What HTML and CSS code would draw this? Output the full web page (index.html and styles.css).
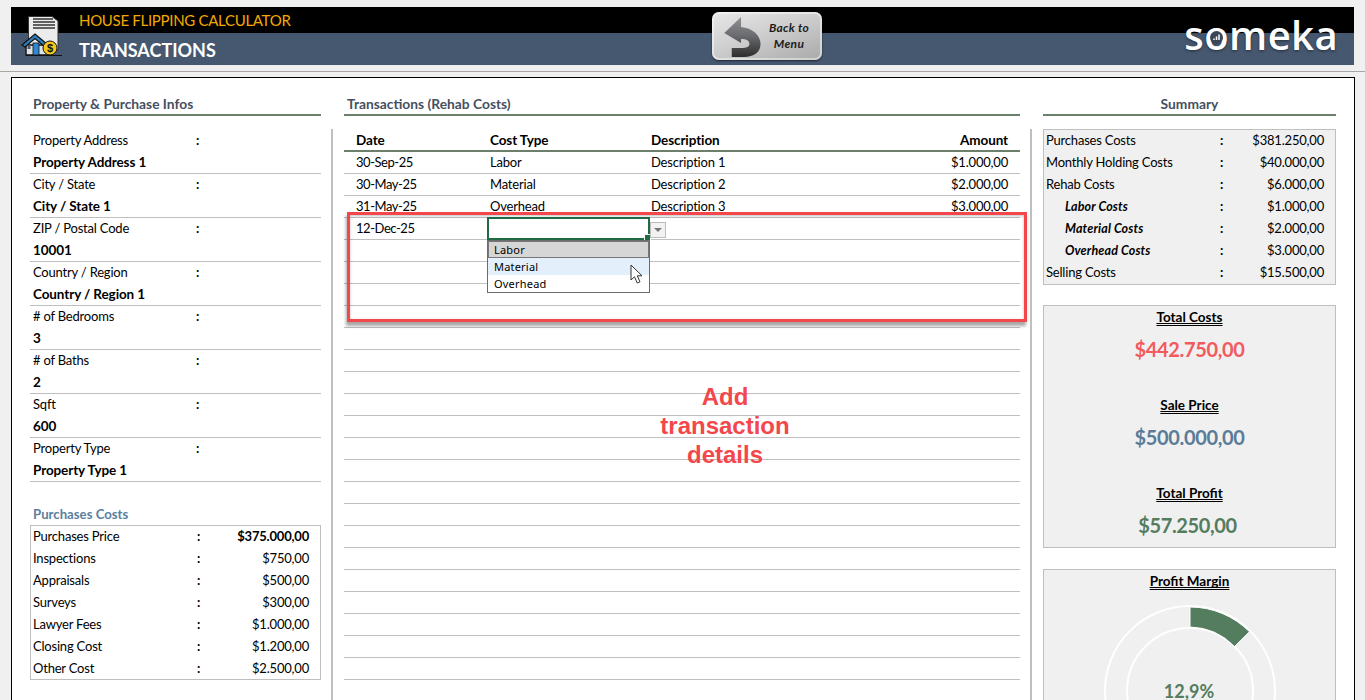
FILE: index.html
```html
<!DOCTYPE html>
<html lang="en">
<head>
<meta charset="utf-8">
<title>House Flipping Calculator - Transactions</title>
<link rel="stylesheet" href="styles.css">
</head>
<body>
<header class="banner">
  <div class="banner-top"><span class="app-name">HOUSE FLIPPING CALCULATOR</span></div>
  <div class="banner-bottom"><span class="page-name">TRANSACTIONS</span></div>
  <svg class="app-icon" width="60" height="56" viewBox="0 0 60 56">
    <path d="M13.5 8.5H37L43 13V42H13.5Z" fill="#ececec" stroke="#333" stroke-width="1"/>
    <path d="M18 11H38M18 14H40M18 17H40M18 20H40" stroke="#333" stroke-width="1.4"/>
    <path d="M11 37V47H37V37Z" fill="#dfe3e8" stroke="#111" stroke-width="1.4"/>
    <path d="M7 37L20 26L33 37L30 39L20 30.5L10 39Z" fill="#2f7fc0" stroke="#111" stroke-width="1.2"/>
    <rect x="18" y="35" width="6" height="12" fill="#2f87d0" stroke="#111" stroke-width=".8"/>
    <rect x="12.500" y="37" width="3" height="4" fill="#556"/>
    <path d="M11 47.500H47" stroke="#111" stroke-width="1.2"/>
    <circle cx="35" cy="40" r="7" fill="#f7c51e" stroke="#111" stroke-width="1"/>
    <text class="coin" x="35" y="44" text-anchor="middle">$</text>
  </svg>
  <div class="back-btn">
    <svg class="back-arrow" width="46" height="44" viewBox="0 0 46 44">
      <defs>
        <linearGradient id="ar" x1="0" y1="0" x2="0" y2="1">
          <stop offset="0" stop-color="#8f9296"/>
          <stop offset=".45" stop-color="#6b6d70"/>
          <stop offset="1" stop-color="#2e2e2e"/>
        </linearGradient>
      </defs>
      <path d="M28 2L10 18L28 28V24C33 24 37 25 37 29C37 32 33 33 29 33H18V42H31C42 42 49 37 49 29C49 20 40 13 28 12Z" transform="translate(-2 0) scale(.93 1)" fill="url(#ar)"/>
    </svg>
    <span class="back-text">Back to<br>Menu</span>
  </div>
  <div class="logo">s<span class="logo-o">o<svg class="logo-mark" width="13" height="13" viewBox="0 0 13 13"><circle cx="6.5" cy="6.5" r="6.5" fill="#3a4656"/><path d="M4 9V7.5M6.5 9V5.5M9 9V3.5" stroke="#fff" stroke-width="1.5"/></svg></span>meka</div>
</header>
<div class="rule"></div>
<main class="panel">
  <section class="col-left">
    <h2 class="sec-title">Property &amp; Purchase Infos</h2>
    <div class="list">
      <div class="pair"><span class="lbl">Property Address</span><span class="colon">:</span></div>
      <div class="pair val">Property Address 1</div>
      <div class="pair"><span class="lbl">City / State</span><span class="colon">:</span></div>
      <div class="pair val">City / State 1</div>
      <div class="pair"><span class="lbl">ZIP / Postal Code</span><span class="colon">:</span></div>
      <div class="pair val">10001</div>
      <div class="pair"><span class="lbl">Country / Region</span><span class="colon">:</span></div>
      <div class="pair val">Country / Region 1</div>
      <div class="pair"><span class="lbl"># of Bedrooms</span><span class="colon">:</span></div>
      <div class="pair val">3</div>
      <div class="pair"><span class="lbl"># of Baths</span><span class="colon">:</span></div>
      <div class="pair val">2</div>
      <div class="pair"><span class="lbl">Sqft</span><span class="colon">:</span></div>
      <div class="pair val">600</div>
      <div class="pair"><span class="lbl">Property Type</span><span class="colon">:</span></div>
      <div class="pair val">Property Type 1</div>
    </div>
    <h3 class="sub-title">Purchases Costs</h3>
    <div class="cost-box">
      <div class="cost"><span>Purchases Price</span><span class="c">:</span><b class="num strong">$375.000,00</b></div>
      <div class="cost"><span>Inspections</span><span class="c">:</span><span class="num">$750,00</span></div>
      <div class="cost"><span>Appraisals</span><span class="c">:</span><span class="num">$500,00</span></div>
      <div class="cost"><span>Surveys</span><span class="c">:</span><span class="num">$300,00</span></div>
      <div class="cost"><span>Lawyer Fees</span><span class="c">:</span><span class="num">$1.000,00</span></div>
      <div class="cost"><span>Closing Cost</span><span class="c">:</span><span class="num">$1.200,00</span></div>
      <div class="cost"><span>Other Cost</span><span class="c">:</span><span class="num">$2.500,00</span></div>
    </div>
  </section>
  <div class="divider"></div>
  <section class="col-mid">
    <h2 class="sec-title">Transactions (Rehab Costs)</h2>
    <div class="table">
      <div class="tr th"><span>Date</span><span>Cost Type</span><span>Description</span><span class="amt">Amount</span></div>
      <div class="tr"><span class="date">30-Sep-25</span><span>Labor</span><span>Description 1</span><span class="amt">$1.000,00</span></div>
      <div class="tr"><span class="date">30-May-25</span><span>Material</span><span>Description 2</span><span class="amt">$2.000,00</span></div>
      <div class="tr"><span class="date">31-May-25</span><span>Overhead</span><span>Description 3</span><span class="amt">$3.000,00</span></div>
      <div class="tr"><span class="date">12-Dec-25</span></div>
      <div class="tr"></div><div class="tr"></div><div class="tr"></div><div class="tr"></div><div class="tr"></div>
      <div class="tr"></div><div class="tr"></div><div class="tr"></div><div class="tr"></div><div class="tr"></div>
      <div class="tr"></div><div class="tr"></div><div class="tr"></div><div class="tr"></div><div class="tr"></div>
      <div class="tr"></div><div class="tr"></div><div class="tr"></div><div class="tr"></div><div class="tr"></div>
    </div>
    <div class="callout"></div>
    <div class="cell-sel"></div>
    <div class="dd-btn"><i class="dd-tri"></i></div>
    <ul class="dd-list">
      <li class="dd-item dd-cur">Labor</li>
      <li class="dd-item dd-hov">Material</li>
      <li class="dd-item">Overhead</li>
    </ul>
    <svg class="cursor" width="14" height="21" viewBox="0 0 14 21">
      <path d="M1 1V16L4.500 12.800L7.200 19L10 17.800L7.300 11.800H12Z" fill="#fff" stroke="#333" stroke-width="1"/>
    </svg>
    <p class="note">Add<br>transaction<br>details</p>
  </section>
  <div class="divider"></div>
  <section class="col-right">
    <h2 class="sec-title center">Summary</h2>
    <div class="sum-box">
      <div class="sum"><span>Purchases Costs</span><span class="c">:</span><span class="num">$381.250,00</span></div>
      <div class="sum"><span>Monthly Holding Costs</span><span class="c">:</span><span class="num">$40.000,00</span></div>
      <div class="sum"><span>Rehab Costs</span><span class="c">:</span><span class="num">$6.000,00</span></div>
      <div class="sum"><span class="sub">Labor Costs</span><span class="c">:</span><span class="num">$1.000,00</span></div>
      <div class="sum"><span class="sub">Material Costs</span><span class="c">:</span><span class="num">$2.000,00</span></div>
      <div class="sum"><span class="sub">Overhead Costs</span><span class="c">:</span><span class="num">$3.000,00</span></div>
      <div class="sum"><span>Selling Costs</span><span class="c">:</span><span class="num">$15.500,00</span></div>
    </div>
    <div class="kpi-box">
      <div class="kpi"><div class="kpi-t">Total Costs</div><div class="kpi-v red">$442.750,00</div></div>
      <div class="kpi"><div class="kpi-t">Sale Price</div><div class="kpi-v blue">$500.000,00</div></div>
      <div class="kpi"><div class="kpi-t">Total Profit</div><div class="kpi-v green">$57.250,00</div></div>
    </div>
    <div class="margin-box">
      <div class="kpi-t">Profit Margin</div>
      <svg class="donut" width="291" height="190" viewBox="0 0 291 190">
        <circle cx="146" cy="91" r="85" fill="none" stroke="#fff" stroke-width="2"/>
        <circle cx="146" cy="91" r="63" fill="none" stroke="#fff" stroke-width="2"/>
        <path d="M146 7A84 84 0 0 1 205.500 31.700L190.500 46.500A64 64 0 0 0 146 27Z" fill="#547c5e" stroke="#fff" stroke-width="1"/>
        <text class="donut-t" x="145" y="98" text-anchor="middle">12,9%</text>
      </svg>
    </div>
  </section>
</main>
</body>
</html>
```
FILE: styles.css
```css
* { box-sizing: border-box; }
html, body { margin: 0; height: 700px; overflow: hidden; }
body {
  background: #f0f0f0;
  font-family: Lato, "Open Sans", sans-serif;
  font-size: 13px;
  letter-spacing: -.2px;
  color: #000;
  padding-top: 7px;
}
h2, h3, p, ul { margin: 0; padding: 0; }

.banner { position: relative; margin: 0 11px; height: 58px; display: flex; flex-direction: column; letter-spacing: 0; }
.banner-top { height: 26px; background: #000; padding-left: 68px; display: flex; align-items: center; }
.banner-bottom { flex: 1; background: #465870; padding: 2px 0 0 68px; display: flex; align-items: center; }
.app-name { color: #f5a800; font-size: 15px; letter-spacing: -.3px; }
.page-name { color: #fff; font-size: 18px; font-weight: 700; }
.app-icon { position: absolute; left: 4px; top: 1px; }
.coin { font: 700 11px "Liberation Sans", sans-serif; fill: #111; }

.back-btn {
  position: absolute; left: 701px; top: 5px; width: 110px; height: 48px;
  border-radius: 7px;
  background: linear-gradient(160deg, #e8e8e8 0%, #cfcfcf 45%, #a9a9a9 100%);
  box-shadow: inset 0 0 0 2px rgba(255,255,255,.45), 0 1px 2px rgba(0,0,0,.6);
}
.back-arrow { position: absolute; left: 5px; top: 3px; }
.back-text {
  position: absolute; left: 47px; right: 3px; top: 8px;
  text-align: center; font-size: 12px; letter-spacing: .3px; line-height: 16px; font-weight: 700; font-style: italic; color: #1c1c1c;
}
.logo {
  position: absolute; right: 16px; top: 5px; color: #fff;
  font-family: "Open Sans", sans-serif; font-size: 40px; line-height: 46px; font-weight: 600; letter-spacing: .4px;
  text-shadow: 0 1px 3px rgba(0,0,0,.5);
}
.logo-o { position: relative; display: inline-block; }
.logo-mark { position: absolute; left: 6px; top: 19px; }

.rule { height: 1px; margin-top: 6px; background: #a6a6a6; }

.panel {
  margin: 5px 10px 0 11px; height: 640px; background: #fff; border: 1px solid #000;
  padding: 16px 0 0 18px;
  display: grid; grid-template-columns: 291px 23px 676px 23px 293px; align-items: start;
}
.sec-title {
  height: 22px; padding-left: 3px; font-size: 13.8px; letter-spacing: 0; font-weight: 700; line-height: 20px; color: #45505f;
  border-bottom: 2px solid #6b7f6b;
}
.sec-title.center { text-align: center; padding-left: 0; }

.divider { width: 2px; height: 600px; margin: 35px 0 0 10px; background: #bfbfbf; }

.list { margin-top: 14px; }
.pair { height: 22px; line-height: 21px; padding-left: 3px; display: flex; }
.pair.val { font-weight: 700; font-size: 13.5px; letter-spacing: -.1px; border-bottom: 1px solid #bfbfbf; }
.lbl { width: 163px; }
.colon { font-weight: 700; }
.sub-title { margin-top: 22px; height: 22px; padding-left: 3px; font-size: 13.2px; letter-spacing: 0; line-height: 20px; font-weight: 700; color: #5b7f9e; }

.cost-box { border: 1px solid #bfbfbf; height: 155px; margin-top: -1px; }
.cost, .sum { height: 22px; line-height: 21px; display: grid; }
.cost { grid-template-columns: 164px 20px 1fr; padding: 0 11px 0 2px; }
.sum { grid-template-columns: 174px 30px 1fr; padding: 0 11px 0 2px; }
.c { font-weight: 700; }
.num { text-align: right; }
.strong { letter-spacing: -.2px; }

.col-mid { position: relative; }
.table { margin-top: 14px; }
.tr { height: 22px; line-height: 21px; border-bottom: 1px solid #bfbfbf; display: grid; grid-template-columns: 134px 161px 200px 1fr; padding: 0 12px; }
.th { font-weight: 700; font-size: 13.5px; letter-spacing: -.1px; border-bottom: 2px solid #6b7f6b; line-height: 20px; }
.amt { text-align: right; }
.date { letter-spacing: -.45px; }

.callout {
  position: absolute; left: 3px; top: 118px; width: 680px; height: 110px;
  border: 3px solid #f4474b;
  box-shadow: -1px 4px 3px rgba(0,0,0,.35), inset 0 1px 3px rgba(0,0,0,.25);
}
.cell-sel { position: absolute; left: 143px; top: 123px; width: 163px; height: 23px; border: 2px solid #1e6b45; background: #fff; }
.cell-sel::after { content: ""; position: absolute; right: -3px; bottom: -3px; width: 5px; height: 5px; background: #1e6b45; border: 1px solid #fff; }
.dd-btn { position: absolute; left: 306px; top: 128px; width: 16px; height: 16px; background: #f2f2f2; border: 1px solid #bdbdbd; display: flex; align-items: center; justify-content: center; }
.dd-tri { width: 0; height: 0; border: 4px solid transparent; border-top: 4px solid #777; border-bottom: 0; }
.dd-list { position: absolute; left: 143px; top: 146px; width: 163px; height: 53px; list-style: none; background: #fff; border: 1px solid #6b6b6b; }
.dd-item { height: 17px; line-height: 17px; padding-left: 6px; font-family: "Noto Sans", sans-serif; font-size: 11px; letter-spacing: .2px; }
.dd-cur { background: #d6d6d6; outline: 1px solid #777; outline-offset: -1px; }
.dd-hov { background: #e3f0fb; }
.cursor { position: absolute; left: 286px; top: 170px; }
.note {
  position: absolute; left: 281px; top: 288px; width: 200px; text-align: center;
  font-family: "Liberation Sans", sans-serif; font-weight: 700; font-size: 24px; letter-spacing: 0; line-height: 29px; color: #f4474b;
}

.sum-box { margin-top: 13px; height: 156px; background: #f0f0f0; border: 1px solid #bfbfbf; }
.sub { padding-left: 19px; font-weight: 700; font-style: italic; font-size: 12.5px; letter-spacing: .15px; }
.kpi-box { margin-top: 20px; height: 243px; background: #f0f0f0; border: 1px solid #bfbfbf; }
.kpi { height: 88px; text-align: center; }
.kpi-t { height: 22px; line-height: 22px; text-align: center; font-size: 13.5px; letter-spacing: 0; font-weight: 700; text-decoration: underline double; text-decoration-skip-ink: none; }
.kpi-v { height: 42px; line-height: 42px; font-size: 20px; letter-spacing: -.35px; font-weight: 700; }
.red { color: #f25a5e; }
.blue { color: #5a7c98; }
.green { color: #547c5e; padding-right: 4px; }
.margin-box { margin-top: 21px; height: 200px; background: #f0f0f0; border: 1px solid #bfbfbf; }
.donut { display: block; margin-top: 8px; }
.donut-t { font-size: 18px; font-weight: 700; fill: #547c5e; letter-spacing: 0; }
```
